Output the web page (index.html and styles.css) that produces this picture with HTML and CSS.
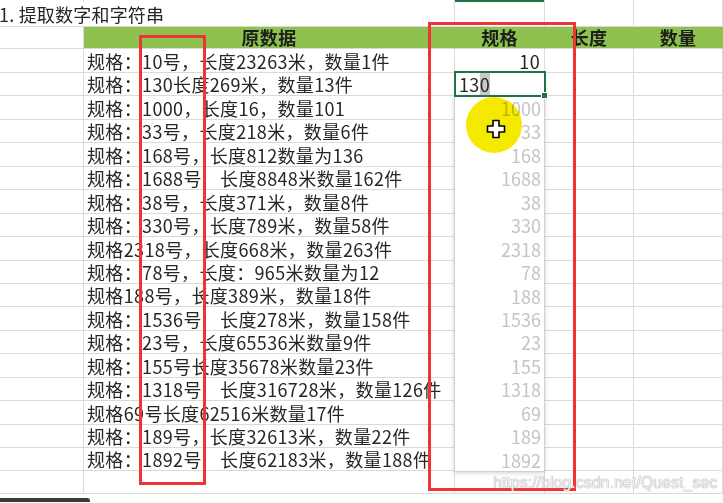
FILE: index.html
```html
<!DOCTYPE html>
<html lang="zh-CN">
<head>
    <meta charset="UTF-8">
    <title>提取数字和字符串</title>
    <link rel="stylesheet" href="styles.css">
</head>
<body>

<div class="sheet">
    <div class="row row-top">
        <div class="cell"></div><div class="cell"></div><div class="cell active-col"></div><div class="cell"></div><div class="cell"></div>
    </div>
    <div class="row row-title">
        <div class="cell title">1. 提取数字和字符串</div><div class="cell"></div><div class="cell"></div><div class="cell"></div>
    </div>
    <div class="row row-head">
        <div class="cell"></div>
        <div class="cell head">原数据</div>
        <div class="cell head">规格</div>
        <div class="cell head">长度</div>
        <div class="cell head">数量</div>
    </div>

    <div class="row"><div class="cell"></div><div class="cell">规格：10号，长度23263米，数量1件</div><div class="cell num">10</div><div class="cell"></div><div class="cell"></div></div>
    <div class="row"><div class="cell"></div><div class="cell">规格：130长度269米，数量13件</div><div class="cell editing">13<span class="sel">0</span><span class="handle"></span></div><div class="cell"></div><div class="cell"></div></div>
    <div class="row"><div class="cell"></div><div class="cell">规格：1000，长度16，数量101</div><div class="cell"></div><div class="cell"></div><div class="cell"></div></div>
    <div class="row"><div class="cell"></div><div class="cell">规格：33号，长度218米，数量6件</div><div class="cell"></div><div class="cell"></div><div class="cell"></div></div>
    <div class="row"><div class="cell"></div><div class="cell">规格：168号，长度812数量为136</div><div class="cell"></div><div class="cell"></div><div class="cell"></div></div>
    <div class="row"><div class="cell"></div><div class="cell">规格：1688号　长度8848米数量162件</div><div class="cell"></div><div class="cell"></div><div class="cell"></div></div>
    <div class="row"><div class="cell"></div><div class="cell">规格：38号，长度371米，数量8件</div><div class="cell"></div><div class="cell"></div><div class="cell"></div></div>
    <div class="row"><div class="cell"></div><div class="cell">规格：330号，长度789米，数量58件</div><div class="cell"></div><div class="cell"></div><div class="cell"></div></div>
    <div class="row"><div class="cell"></div><div class="cell">规格2318号，长度668米，数量263件</div><div class="cell"></div><div class="cell"></div><div class="cell"></div></div>
    <div class="row"><div class="cell"></div><div class="cell">规格：78号，长度：965米数量为12</div><div class="cell"></div><div class="cell"></div><div class="cell"></div></div>
    <div class="row"><div class="cell"></div><div class="cell">规格188号，长度389米，数量18件</div><div class="cell"></div><div class="cell"></div><div class="cell"></div></div>
    <div class="row"><div class="cell"></div><div class="cell">规格：1536号　长度278米，数量158件</div><div class="cell"></div><div class="cell"></div><div class="cell"></div></div>
    <div class="row"><div class="cell"></div><div class="cell">规格：23号，长度65536米数量9件</div><div class="cell"></div><div class="cell"></div><div class="cell"></div></div>
    <div class="row"><div class="cell"></div><div class="cell">规格：155号长度35678米数量23件</div><div class="cell"></div><div class="cell"></div><div class="cell"></div></div>
    <div class="row"><div class="cell"></div><div class="cell">规格：1318号　长度316728米，数量126件</div><div class="cell"></div><div class="cell"></div><div class="cell"></div></div>
    <div class="row"><div class="cell"></div><div class="cell">规格69号长度62516米数量17件</div><div class="cell"></div><div class="cell"></div><div class="cell"></div></div>
    <div class="row"><div class="cell"></div><div class="cell">规格：189号，长度32613米，数量22件</div><div class="cell"></div><div class="cell"></div><div class="cell"></div></div>
    <div class="row"><div class="cell"></div><div class="cell">规格：1892号　长度62183米，数量188件</div><div class="cell"></div><div class="cell"></div><div class="cell"></div></div>
    <div class="row"><div class="cell"></div><div class="cell"></div><div class="cell"></div><div class="cell"></div><div class="cell"></div></div>

    <div class="sheet-tab"></div>

    <!-- flash fill suggestions -->
    <div class="suggest">
        <div>1000</div><div>33</div><div>168</div><div>1688</div>
        <div>38</div><div>330</div><div>2318</div><div>78</div>
        <div>188</div><div>1536</div><div>23</div><div>155</div>
        <div>1318</div><div>69</div><div>189</div><div>1892</div>
    </div>

    <div class="mark mark-src"></div>
    <div class="mark mark-out"></div>

    <div class="spot"></div>
    <svg class="pointer" width="20" height="20" viewBox="0 0 20 20">
        <path d="M7 1.5h6v5.5h5.5v6h-5.5v5.5h-6v-5.5h-5.5v-6h5.5z" fill="#fff" stroke="#000" stroke-width="1.6" stroke-linejoin="round"/>
    </svg>

    <div class="watermark">https://blog.csdn.net/Quest_sec</div>
</div>

</body>
</html>
```

FILE: styles.css
```css
body {
    margin: 0;
    background-color: #fff;
    font-family: "Noto Sans CJK SC", sans-serif;
}
.sheet {
    position: relative;
    width: 723px;
    height: 503px;
    overflow: hidden;
}
.row {
    display: grid;
    grid-template-columns: 84px 371px 90px 89px 89px;
    height: 23.45px;
}
.row-top {
    height: 2px;
}
.row-title {
    height: 25px;
    grid-template-columns: 455px 90px 89px 89px;
}
.row-head {
    height: 22px;
}
.cell {
    box-sizing: border-box;
    border-right: 1px solid #dadada;
    border-bottom: 1px solid #dadada;
    padding: 2px 3px 0;
    font-size: 18px;
    line-height: 21px;
    letter-spacing: 0.35px;
    color: #262626;
    white-space: nowrap;
}
.row-top .cell {
    padding: 0;
    border-bottom: none;
}
.row-top .active-col {
    background-color: #217346;
}
.title {
    padding-left: 0;
    margin-left: -1px;
    letter-spacing: 0.2px;
}
.head {
    background-color: #8ec14d;
    border-right-color: #8ec14d;
    padding-top: 0;
    font-weight: bold;
    text-align: center;
    color: #1e1e1e;
}
.num {
    text-align: right;
    padding-right: 4px;
}
.editing {
    position: relative;
    z-index: 3;
    outline: 2px solid #217346;
    outline-offset: -1px;
    padding-left: 4px;
}
.sel {
    background-color: #c8c8c8;
}
.handle {
    position: absolute;
    right: -4px;
    bottom: -4px;
    width: 5px;
    height: 5px;
    background-color: #217346;
    border: 1px solid #fff;
}
.sheet-tab {
    width: 90px;
    height: 4px;
    margin-top: 4px;
    background-color: #3a3a3a;
    border-radius: 0 3px 0 0;
}
.suggest {
    position: absolute;
    left: 455px;
    top: 96px;
    width: 89px;
    height: 375px;
    background-color: #fff;
    box-shadow: 0 0 0 1px #d0d0d0, 0 1px 5px rgba(0, 0, 0, 0.25);
}
.suggest div {
    box-sizing: border-box;
    height: 23.45px;
    padding: 2px 3px 0;
    text-align: right;
    font-size: 18px;
    line-height: 21px;
    color: #c4c4c4;
}
.mark {
    position: absolute;
    box-sizing: border-box;
    border: 3px solid #ee3436;
}
.mark-src {
    left: 139px;
    top: 35px;
    width: 67px;
    height: 450px;
}
.mark-out {
    left: 428px;
    top: 22px;
    width: 148px;
    height: 469px;
}
.spot {
    position: absolute;
    left: 466px;
    top: 97px;
    width: 56px;
    height: 56px;
    border-radius: 50%;
    background-color: #f6e900;
    mix-blend-mode: multiply;
}
.pointer {
    position: absolute;
    left: 486px;
    top: 119px;
}
.watermark {
    position: absolute;
    left: 493px;
    top: 474px;
    font-family: "Liberation Sans", Arial, sans-serif;
    font-size: 16px;
    color: rgba(255, 255, 255, 0.85);
    text-shadow: 0 0 1px #9a9a9a, 0 0 1px #9a9a9a;
}
```
